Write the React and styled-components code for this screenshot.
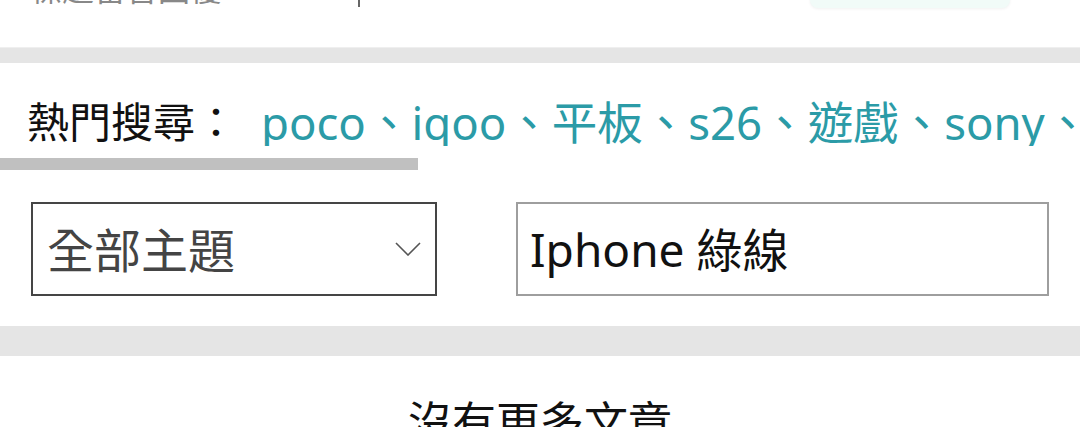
import React from 'react';
import styled, { createGlobalStyle } from 'styled-components';

const Global = createGlobalStyle`
  html, body {
    margin: 0;
    padding: 0;
    background: #fff;
    font-family: "Noto Sans", "Noto Sans CJK TC", sans-serif;
  }
`;

const Page = styled.div`
  width: 1080px;
  height: 427px;
  overflow: hidden;
  background: #fff;
`;

// the header row is scrolled past, only the bottom of it shows
const TopStrip = styled.div`
  height: 47px;
  display: flex;
  align-items: flex-start;
  padding: 0 30px;
  overflow: hidden;
`;

const GhostText = styled.span`
  margin-top: -28px;
  font-size: 32px;
  line-height: 33px;
  color: #888;
  width: 328px;
`;

const Caret = styled.span`
  width: 2px;
  height: 7px;
  background: #666;
`;

const MintButton = styled.span`
  margin-left: auto;
  margin-right: 40px;
  margin-top: -40px;
  width: 200px;
  height: 48px;
  border-radius: 8px;
  background: #f1fbf8;
  box-shadow: 0 1px 3px rgba(0, 0, 0, 0.06);
`;

const Band = styled.div`
  height: ${p => p.h}px;
  background: #e5e5e5;
  border-top: ${p => (p.edge ? '1px solid #efefef' : 'none')};
`;

const HotSection = styled.section`
  padding-top: 30px;
`;

const HotRow = styled.div`
  display: flex;
  align-items: center;
  white-space: nowrap;
  overflow: hidden;
  padding-left: 27px;
  height: 53px;
`;

const HotLabel = styled.span`
  color: #111;
  margin-right: 24px;
  font-family: "Noto Sans CJK TC", sans-serif;
  font-size: 42px;
`;

const HotLink = styled.a`
  color: #2b9ba7;
  text-decoration: none;
  font-size: 45.5px;
`;

const ScrollThumb = styled.div`
  margin-top: 12px;
  width: 418px;
  height: 12px;
  background: #c0c0c0;
`;

const FilterRow = styled.div`
  display: flex;
  gap: 79px;
  padding: 32px 31px 30px;
`;

const SelectBox = styled.div`
  box-sizing: border-box;
  width: 406px;
  height: 94px;
  border: 2px solid #454545;
  display: flex;
  align-items: center;
  justify-content: space-between;
  padding: 0 14px 4px 14px;
  font-family: "Noto Sans CJK TC", sans-serif;
  font-size: 47px;
  color: #444;
`;

const Chevron = styled.svg`
  width: 26px;
  height: 14px;
  margin-top: 4px;
`;

const SearchInput = styled.input`
  box-sizing: border-box;
  width: 533px;
  height: 94px;
  border: 2px solid #9e9e9e;
  border-radius: 0;
  padding: 0 0 4px 12px;
  font-family: "Noto Sans", "Noto Sans CJK TC", sans-serif;
  font-size: 46px;
  color: #111;
  outline: none;
  background: #fff;
`;

const EndNote = styled.div`
  padding-top: 31px;
  text-align: center;
  font-family: "Noto Sans CJK TC", sans-serif;
  font-size: 44px;
  line-height: 66px;
  color: #111;
`;

const hotWords = ['poco', 'iqoo', '平板', 's26', '遊戲', 'sony', 'pixel', '摺疊'];

const App = () => (
	<Page>
		<Global />
		<TopStrip>
			<GhostText>標題留言回覆</GhostText>
			<Caret />
			<MintButton />
		</TopStrip>
		<Band h={15} edge />
		<HotSection>
			<HotRow>
				<HotLabel>熱門搜尋：</HotLabel>
				{hotWords.map(word => (
					<HotLink key={word} href="#">{word}、</HotLink>
				))}
			</HotRow>
			<ScrollThumb />
		</HotSection>
		<FilterRow>
			<SelectBox>
				<span>全部主題</span>
				<Chevron viewBox="0 0 26 14">
					<polyline points="1,1 13,13 25,1" fill="none" stroke="#555" strokeWidth="1.6" />
				</Chevron>
			</SelectBox>
			<SearchInput defaultValue="Iphone 綠線" />
		</FilterRow>
		<Band h={30} />
		<EndNote>沒有更多文章</EndNote>
	</Page>
);

export default App;
